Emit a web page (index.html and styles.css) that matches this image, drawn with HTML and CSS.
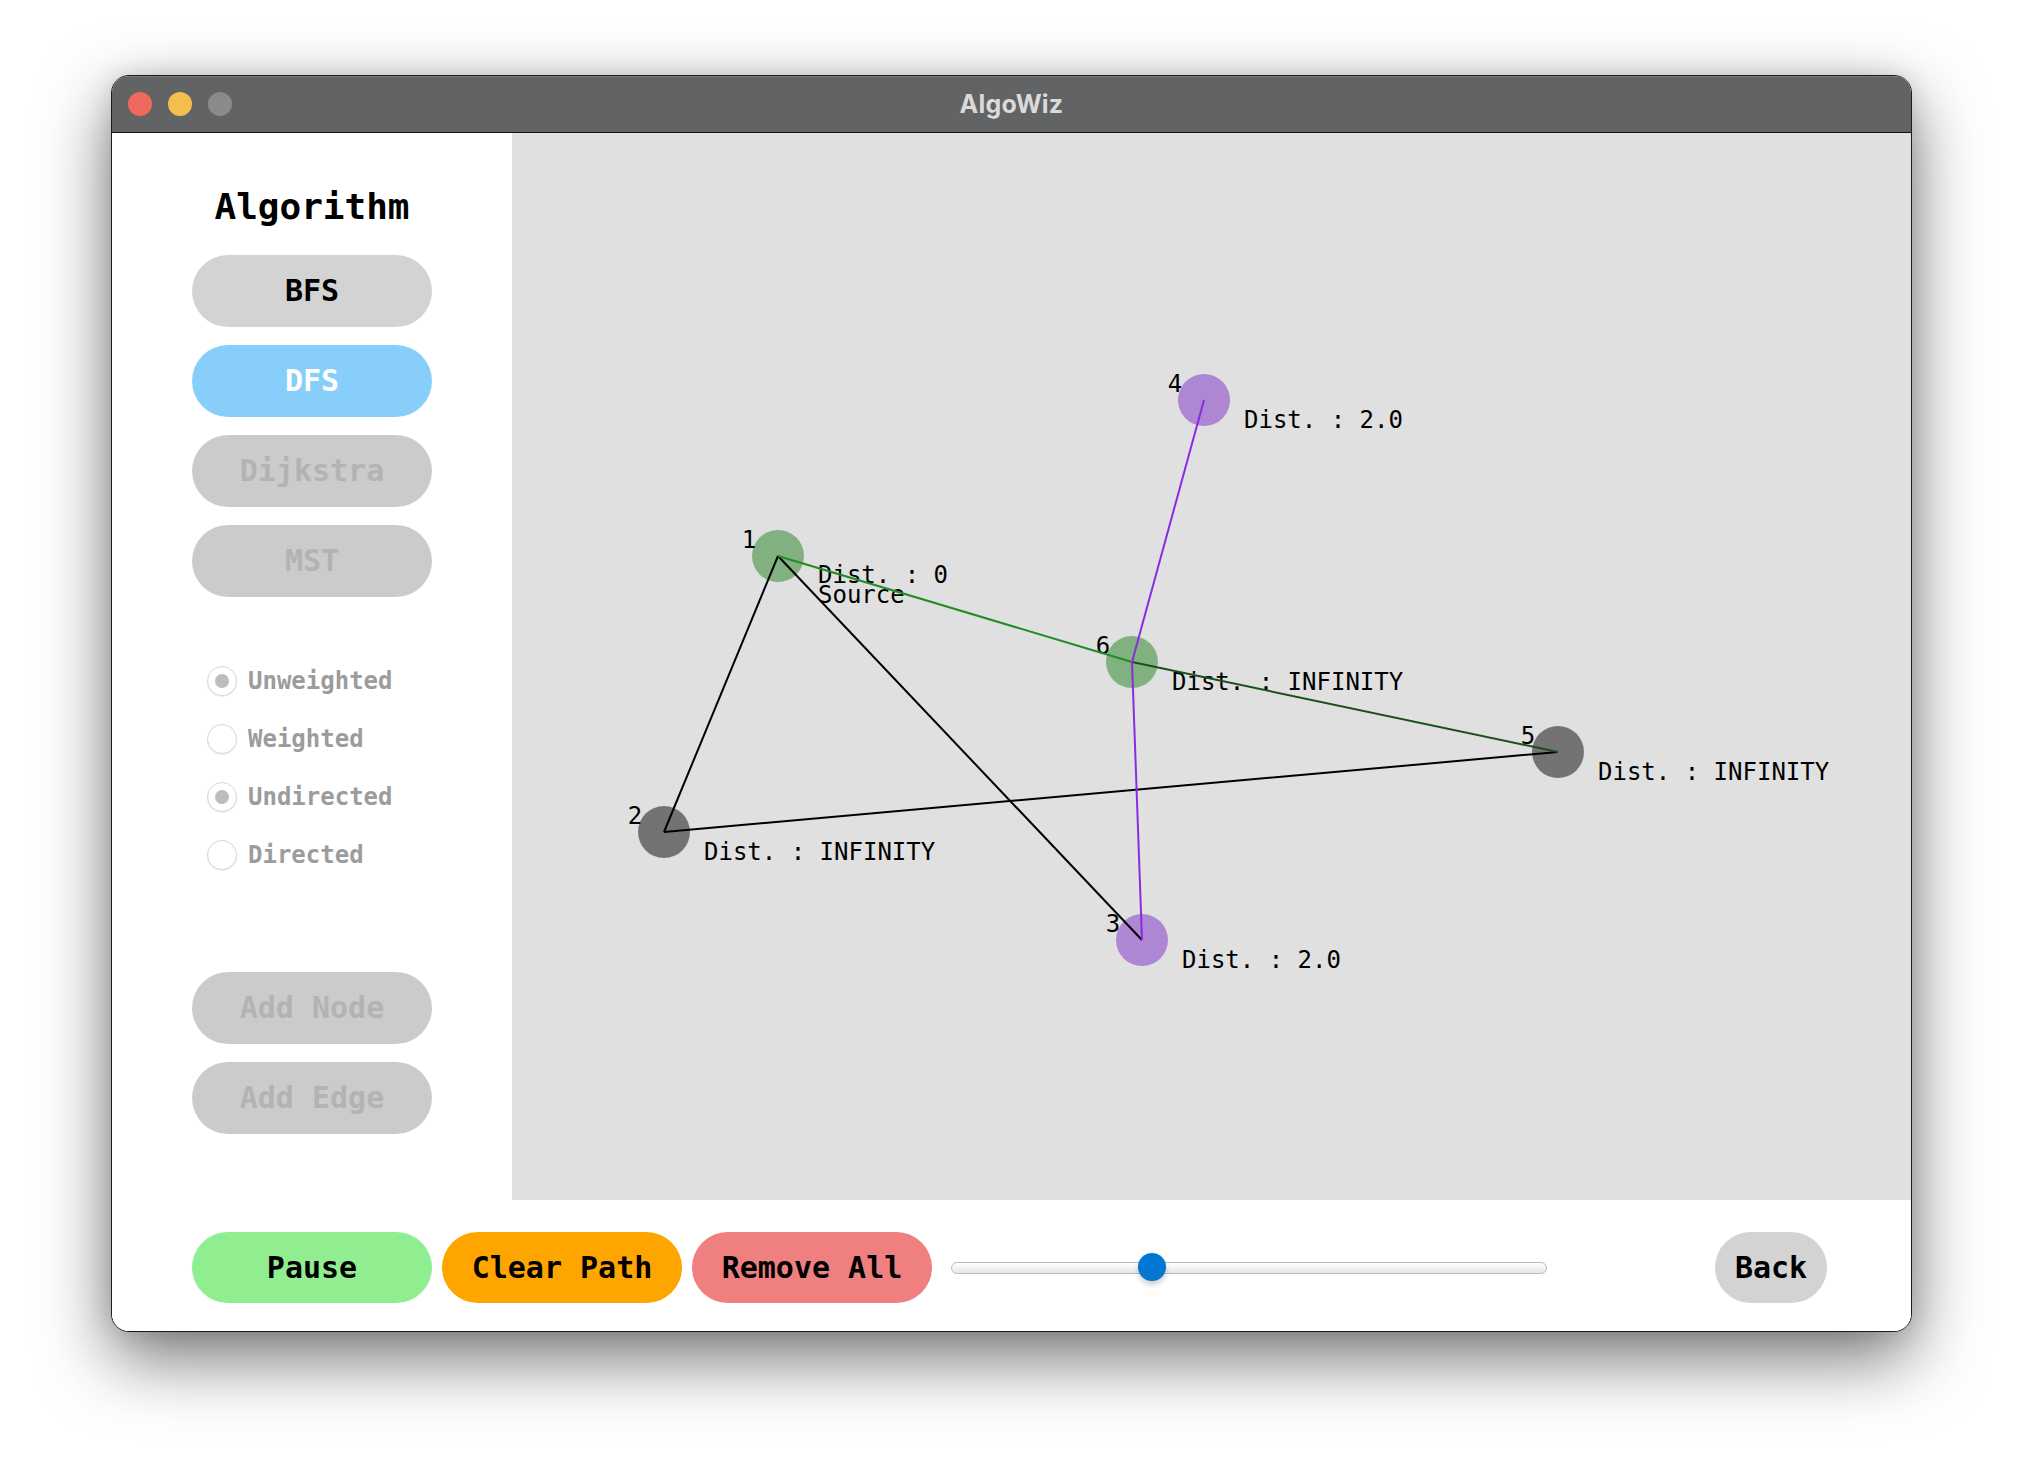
FILE: index.html
```html
<!DOCTYPE html>
<html>
<head>
<meta charset="utf-8">
<title>AlgoWiz</title>
<link rel="stylesheet" href="styles.css">
</head>
<body>
<div class="window">
  <div class="titlebar">
    <div class="lights">
      <span class="light red"></span>
      <span class="light yellow"></span>
      <span class="light grey"></span>
    </div>
    <div class="title">AlgoWiz</div>
  </div>
  <div class="main">
    <aside class="sidebar">
      <h1 class="heading">Algorithm</h1>
      <div class="algo-buttons">
        <button class="pill pill-grey">BFS</button>
        <button class="pill pill-blue">DFS</button>
        <button class="pill pill-disabled">Dijkstra</button>
        <button class="pill pill-disabled">MST</button>
      </div>
      <div class="radios">
        <div class="radio-row"><span class="radio checked"></span><span class="radio-label">Unweighted</span></div>
        <div class="radio-row"><span class="radio"></span><span class="radio-label">Weighted</span></div>
        <div class="radio-row"><span class="radio checked"></span><span class="radio-label">Undirected</span></div>
        <div class="radio-row"><span class="radio"></span><span class="radio-label">Directed</span></div>
      </div>
      <div class="edit-buttons">
        <button class="pill pill-disabled">Add Node</button>
        <button class="pill pill-disabled">Add Edge</button>
      </div>
    </aside>
    <section class="canvas">
      <svg class="graph" width="1399" height="1067" viewBox="512 133 1399 1067" xmlns="http://www.w3.org/2000/svg">
        <g class="nodes">
          <circle cx="778" cy="556" r="26" fill="#81b181"/>
          <circle cx="664" cy="832" r="26" fill="#737373"/>
          <circle cx="1142" cy="940" r="26" fill="#ad86d4"/>
          <circle cx="1204" cy="400" r="26" fill="#ad86d4"/>
          <circle cx="1558" cy="752" r="26" fill="#737373"/>
          <circle cx="1132" cy="662" r="26" fill="#81b181"/>
        </g>
        <g class="labels">
          <text x="749" y="548" text-anchor="middle">1</text>
          <text x="635" y="824" text-anchor="middle">2</text>
          <text x="1113" y="932" text-anchor="middle">3</text>
          <text x="1175" y="392" text-anchor="middle">4</text>
          <text x="1528" y="744" text-anchor="middle">5</text>
          <text x="1103" y="654" text-anchor="middle">6</text>
          <text x="818" y="583">Dist. : 0</text>
          <text x="818" y="603">Source</text>
          <text x="704" y="860">Dist. : INFINITY</text>
          <text x="1182" y="968">Dist. : 2.0</text>
          <text x="1244" y="428">Dist. : 2.0</text>
          <text x="1598" y="780">Dist. : INFINITY</text>
          <text x="1172" y="690">Dist. : INFINITY</text>
        </g>
        <g class="edges" stroke-width="2" fill="none">
          <line x1="778" y1="556" x2="664" y2="832" stroke="#000"/>
          <line x1="778" y1="556" x2="1142" y2="940" stroke="#000"/>
          <line x1="664" y1="832" x2="1558" y2="752" stroke="#000"/>
          <line x1="778" y1="556" x2="1132" y2="662" stroke="#228b22"/>
          <line x1="1132" y1="662" x2="1558" y2="752" stroke="#1a4f1a"/>
          <line x1="1132" y1="662" x2="1204" y2="400" stroke="#8a2be2"/>
          <line x1="1132" y1="662" x2="1142" y2="940" stroke="#8a2be2"/>
        </g>
      </svg>
    </section>
  </div>
  <div class="bottombar">
    <button class="pill pill-green">Pause</button>
    <button class="pill pill-orange">Clear Path</button>
    <button class="pill pill-red">Remove All</button>
    <div class="slider">
      <div class="track"></div>
      <div class="thumb"></div>
    </div>
    <button class="pill pill-back">Back</button>
  </div>
</div>
</body>
</html>
```
FILE: styles.css
```css
html, body {
  margin: 0;
  padding: 0;
  background: #ffffff;
  width: 2024px;
  height: 1480px;
  overflow: hidden;
}

body {
  font-family: "DejaVu Sans Mono", "Liberation Mono", monospace;
}

.window {
  margin: 75px 0 0 111px;
  width: 1799px;
  height: 1255px;
  border: 1px solid #1c1c1c;
  border-radius: 18px;
  overflow: hidden;
  background: #ffffff;
  box-shadow: 0 26px 70px rgba(0, 0, 0, 0.55), 0 0 24px rgba(0, 0, 0, 0.12);
  display: flex;
  flex-direction: column;
}

.titlebar {
  height: 56px;
  flex: 0 0 56px;
  background: #626365;
  border-bottom: 1px solid #111;
  box-shadow: inset 0 1px 0 #7a7b7d;
  position: relative;
  display: flex;
  align-items: center;
  justify-content: center;
}

.lights {
  position: absolute;
  left: 16px;
  top: 16px;
  display: flex;
  gap: 16px;
}

.light {
  width: 24px;
  height: 24px;
  border-radius: 50%;
  display: block;
}
.light.red { background: #ee6a5f; }
.light.yellow { background: #f5bf4f; }
.light.grey { background: #8a8a8c; }

.title {
  font-family: "Inter", "Liberation Sans", sans-serif;
  font-weight: 700;
  font-size: 25px;
  color: #dadada;
  letter-spacing: 0.2px;
}

.main {
  display: flex;
  height: 1067px;
  flex: 0 0 1067px;
}

.sidebar {
  width: 400px;
  flex: 0 0 400px;
  background: #ffffff;
  display: flex;
  flex-direction: column;
  align-items: center;
  padding-top: 52px;
  box-sizing: border-box;
}

.heading {
  margin: 0;
  font-family: "DejaVu Sans Mono", monospace;
  font-weight: 700;
  font-size: 36px;
  line-height: 44px;
  height: 44px;
  color: #000;
}

.algo-buttons, .edit-buttons {
  display: flex;
  flex-direction: column;
  gap: 18px;
}

.algo-buttons { margin-top: 26px; }

.pill {
  width: 240px;
  height: 72px;
  border: none;
  border-radius: 36px;
  padding: 0;
  margin: 0;
  font-family: "DejaVu Sans Mono", monospace;
  font-weight: 700;
  font-size: 30px;
  line-height: 72px;
  text-align: center;
  color: #000;
  background: #d3d3d3;
}

.pill-grey { background: #d3d3d3; color: #000; }
.pill-blue { background: #87cefa; color: #ffffff; }
.pill-disabled { background: #cbcbcb; color: #b3b3b3; }
.pill-green { background: #90ee90; }
.pill-orange { background: #ffa500; }
.pill-red { background: #f08080; }
.pill-back { width: 112px; background: #d3d3d3; margin-left: auto; }

.radios {
  align-self: flex-start;
  margin-left: 95px;
  margin-top: 69px;
  display: flex;
  flex-direction: column;
  gap: 28px;
}

.radio-row {
  display: flex;
  align-items: center;
  height: 30px;
  gap: 11px;
}

.radio {
  width: 28px;
  height: 28px;
  border-radius: 50%;
  border: 1px solid #d7d7d7;
  background: #ffffff;
  box-shadow: 0 1px 1px rgba(0, 0, 0, 0.08);
  position: relative;
  display: block;
}

.radio.checked::after {
  content: "";
  position: absolute;
  left: 7px;
  top: 7px;
  width: 14px;
  height: 14px;
  border-radius: 50%;
  background: #bdbdbd;
}

.radio-label {
  font-family: "DejaVu Sans Mono", monospace;
  font-weight: 700;
  font-size: 24px;
  color: #9c9c9c;
}

.edit-buttons { margin-top: 102px; }

.canvas {
  width: 1399px;
  flex: 0 0 1399px;
  height: 1067px;
  background: #e0e0e0;
  overflow: hidden;
}

.graph {
  display: block;
}

.graph text {
  font-family: "DejaVu Sans Mono", monospace;
  font-size: 24px;
  fill: #000;
}

.bottombar {
  flex: 1 1 auto;
  display: flex;
  align-items: center;
  gap: 10px;
  padding: 32px 84px 28px 80px;
  box-sizing: border-box;
  background: #ffffff;
}

.bottombar .pill {
  height: 71px;
  line-height: 71px;
}

.slider {
  position: relative;
  width: 596px;
  height: 71px;
  margin-left: 9px;
}

.track {
  position: absolute;
  left: 0;
  right: 0;
  top: 30px;
  height: 10px;
  border: 1px solid #bcbcbc;
  border-radius: 6px;
  background: linear-gradient(#ffffff, #e6e6e6);
}

.thumb {
  position: absolute;
  left: 187px;
  top: 21px;
  width: 28px;
  height: 28px;
  border-radius: 50%;
  background: #0277d2;
  box-shadow: 0 4px 5px rgba(0, 0, 0, 0.18);
}
```
